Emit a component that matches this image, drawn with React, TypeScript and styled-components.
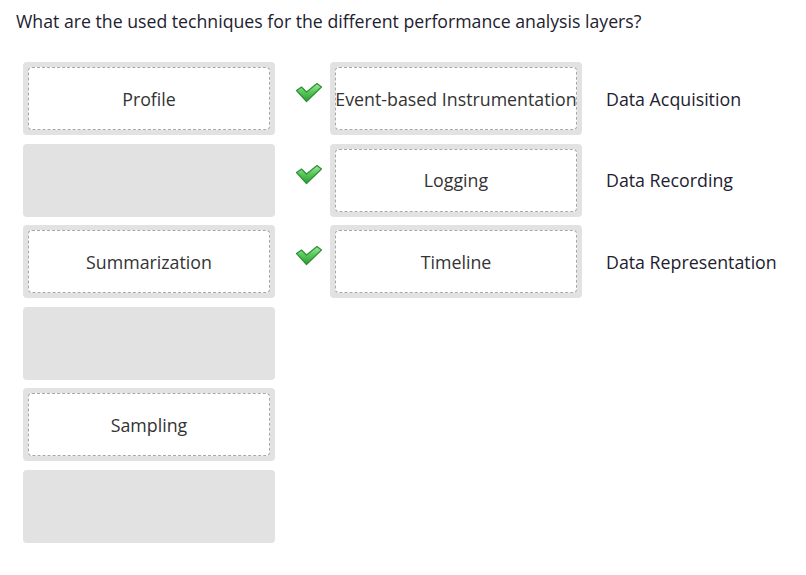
import React from "react";
import styled, { createGlobalStyle } from "styled-components";

const Global = createGlobalStyle`
  html, body { margin: 0; padding: 0; background: #fff; }
  body { font-family: "Open Sans", "Noto Sans", sans-serif; }
`;

const Page = styled.div`
  padding: 9px 0 0 16px;
`;

const Question = styled.h1`
  margin: 0;
  font-size: 17.7px;
  font-weight: 400;
  color: #1d2130;
  line-height: 24px;
`;

const Board = styled.div`
  margin: 29px 0 0 7px;
  display: grid;
  grid-template-columns: 252px 55px 252px auto;
  grid-auto-rows: 73px;
  row-gap: 8.5px;
`;

const Slot = styled.div<{ $col: number; $row: number }>`
  grid-column: ${(p) => p.$col};
  grid-row: ${(p) => p.$row};
  background: #e2e2e2;
  border-radius: 4px;
  padding: 5px;
  box-sizing: border-box;
  display: flex;
`;

const Item = styled.div`
  flex: 1;
  background: #fff;
  border: 1px dashed #a8a8a8;
  border-radius: 4px;
  display: flex;
  align-items: center;
  justify-content: center;
  font-size: 17.8px;
  color: #333;
  white-space: nowrap;
  overflow: hidden;
`;

const Mark = styled.div<{ $row: number }>`
  grid-column: 2;
  grid-row: ${(p) => p.$row};
  display: flex;
  align-items: flex-start;
  padding: 20px 0 0 20px;
`;

const Label = styled.div<{ $row: number }>`
  grid-column: 4;
  grid-row: ${(p) => p.$row};
  display: flex;
  align-items: center;
  padding-left: 24px;
  font-size: 17.8px;
  color: #1d2130;
  white-space: nowrap;
`;

const Check = () => (
  <svg width="28" height="21" viewBox="0 0 28 21">
    <defs>
      <linearGradient id="cg" x1="0" y1="0" x2="0" y2="1">
        <stop offset="0" stopColor="#a3e8a3" />
        <stop offset="0.45" stopColor="#5acb5a" />
        <stop offset="1" stopColor="#2c9a36" />
      </linearGradient>
    </defs>
    <path
      d="M1.5 8.5 L6.5 5 L11.5 10 L22 1.5 L26.5 5 L11.5 19.5 Z"
      fill="url(#cg)"
      stroke="#2f8f38"
      strokeWidth="1.2"
      strokeLinejoin="round"
    />
  </svg>
);

const left: (string | null)[] = ["Profile", null, "Summarization", null, "Sampling", null];
const middle = ["Event-based Instrumentation", "Logging", "Timeline"];
const labels = ["Data Acquisition", "Data Recording", "Data Representation"];

export default function App() {
  return (
    <Page>
      <Global />
      <Question>What are the used techniques for the different performance analysis layers?</Question>
      <Board>
        {left.map((t, i) => (
          <Slot key={"l" + i} $col={1} $row={i + 1}>
            {t && <Item>{t}</Item>}
          </Slot>
        ))}
        {middle.map((t, i) => (
          <React.Fragment key={"m" + i}>
            <Mark $row={i + 1}>
              <Check />
            </Mark>
            <Slot $col={3} $row={i + 1}>
              <Item>{t}</Item>
            </Slot>
            <Label $row={i + 1}>{labels[i]}</Label>
          </React.Fragment>
        ))}
      </Board>
    </Page>
  );
}
